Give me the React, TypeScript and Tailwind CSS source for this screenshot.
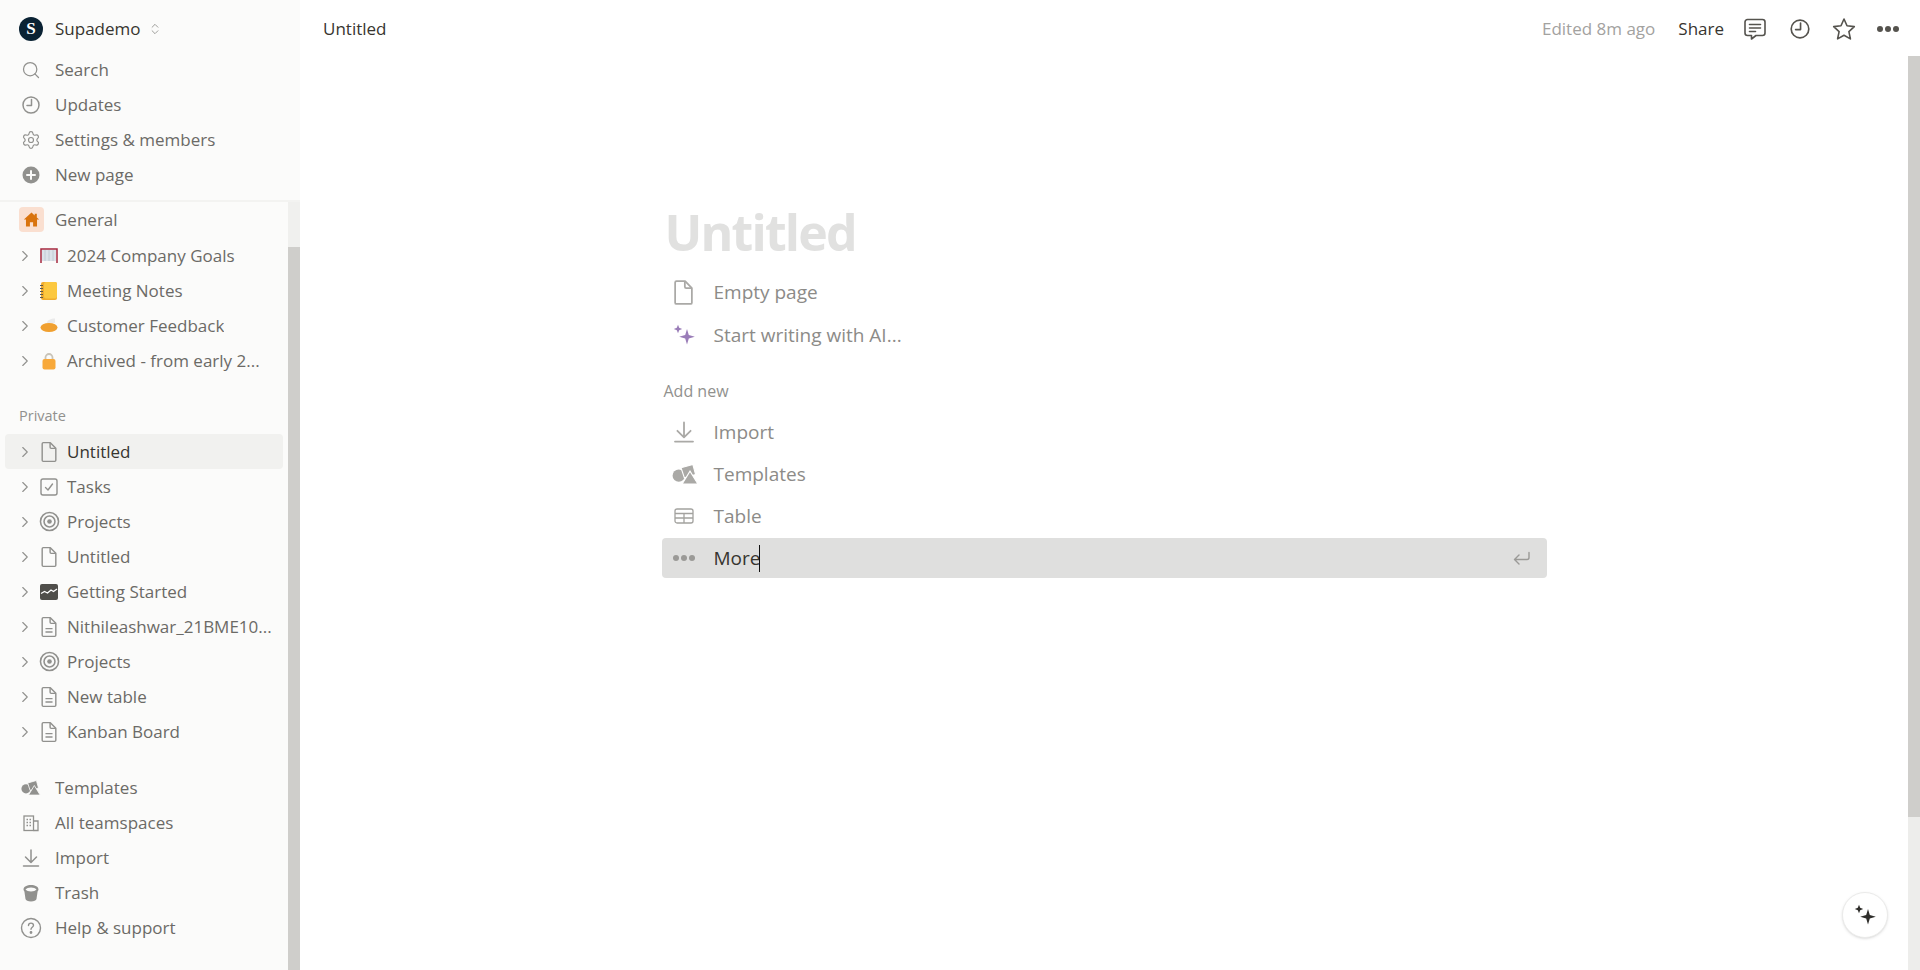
import type { ReactNode } from 'react';
import { ChevronRight, ChevronsUpDown, Search, Settings } from 'lucide-react';

const Clock = ({ size = 20, color = '#91918e' }: { size?: number; color?: string }) => (
  <svg width={size} height={size} viewBox="0 0 20 20" fill="none" stroke={color} strokeWidth="1.5" strokeLinecap="round" strokeLinejoin="round">
    <circle cx="10" cy="10" r="8" />
    <path d="M10.5 4.5V10.5H6" />
  </svg>
);

const PageIcon = ({ lines = false, size = 22, color = '#91918e' }: { lines?: boolean; size?: number; color?: string }) => (
  <svg width={size} height={size} viewBox="0 0 20 20" fill="none" stroke={color} strokeWidth="1.3" strokeLinejoin="round">
    <path d="M3.800 2.500a1 1 0 0 1 1-1h6.400l5 5.200v10.800a1 1 0 0 1-1 1H4.800a1 1 0 0 1-1-1z" />
    <path d="M11 1.700v4a1 1 0 0 0 1 1h4" />
    {lines && <path d="M6.800 11.500h6.400M6.800 14.500h6.400" />}
  </svg>
);

const TaskIcon = () => (
  <svg width="20" height="20" viewBox="0 0 20 20" fill="none" stroke="#91918e" strokeWidth="1.4" strokeLinecap="round" strokeLinejoin="round">
    <rect x="2" y="2" width="16" height="16" rx="2" />
    <path d="M6.500 10.500l2.500 2.500 4.500-6" />
  </svg>
);

const TargetIcon = () => (
  <svg width="21" height="21" viewBox="0 0 20 20" fill="none" stroke="#91918e">
    <circle cx="10" cy="10" r="8.600" strokeWidth="1.500" />
    <circle cx="10" cy="10" r="5.200" strokeWidth="1.500" />
    <circle cx="10" cy="10" r="2.200" fill="#91918e" stroke="none" />
  </svg>
);

const ChartIcon = () => (
  <svg width="20" height="20" viewBox="0 0 20 20">
    <rect x="1" y="2" width="18" height="16" rx="2" fill="#4f4e4a" />
    <path d="M2 11.500l3.500-2 3 1.500 3.500-3 2.500 1.500 3.500-2.500" fill="none" stroke="#fff" strokeWidth="1.300" />
  </svg>
);

const TemplatesIcon = ({ size = 20, color = '#91918e', cut = '#fbfbfa' }: { size?: number; color?: string; cut?: string }) => (
  <svg width={size} height={size} viewBox="0 0 24 20" fill={color}>
    <circle cx="6" cy="11" r="5.500" />
    <path d="M8 4l10.500-3 2.500 9-10 3z" stroke={cut} strokeWidth="1" />
    <path d="M16 7l7 11.500H9z" stroke={cut} strokeWidth="1" />
  </svg>
);

const ImportIcon = ({ size = 20, color = '#91918e' }: { size?: number; color?: string }) => (
  <svg width={size} height={size} viewBox="0 0 20 20" fill="none" stroke={color} strokeWidth="1.500" strokeLinecap="round" strokeLinejoin="round">
    <path d="M10 2v12M4.500 9l5.500 5.500L15.500 9M2.500 18h15" />
  </svg>
);

const BuildingIcon = () => (
  <svg width="20" height="20" viewBox="0 0 20 20" fill="none" stroke="#91918e" strokeWidth="1.300">
    <rect x="3" y="3" width="9.500" height="14.500" />
    <path d="M12.500 8H17v9.500h-4.500M5.500 6.500h1.500M8.500 6.500H10M5.500 9.500h1.500M8.500 9.500H10M5.500 12.500h1.500M8.500 12.500H10" />
  </svg>
);

const TrashIcon = () => (
  <svg width="20" height="20" viewBox="0 0 20 20" fill="#91918e">
    <path d="M2.500 6.500C2.500 3.500 6 2 10 2s7.500 1.500 7.500 4.500c0 .8-.4 1.400-.9 1.900L15.500 16c-.3 1.500-2.500 2.500-5.500 2.500S4.800 17.500 4.500 16L3.400 8.400c-.5-.5-.9-1.100-.9-1.900z" />
    <path d="M4.500 6.500C5.500 5.200 7.500 4.500 10 4.500s4.500.7 5.500 2C14.500 7.700 12.500 8.400 10 8.400S5.500 7.700 4.500 6.500z" fill="#fbfbfa" />
  </svg>
);

const HelpIcon = () => (
  <svg width="22" height="22" viewBox="0 0 22 22" fill="none" stroke="#91918e" strokeWidth="1.400" strokeLinecap="round">
    <circle cx="11" cy="11" r="9.500" />
    <path d="M8.500 8.500c0-1.500 1.100-2.400 2.500-2.400s2.500.9 2.500 2.200c0 2-2.500 2-2.500 4" />
    <circle cx="11" cy="15.500" r=".7" fill="#91918e" />
  </svg>
);

const PlusCircle = () => (
  <svg width="20" height="20" viewBox="0 0 20 20">
    <circle cx="10" cy="10" r="8.500" fill="#91918e" />
    <path d="M10 6v8M6 10h8" stroke="#fbfbfa" strokeWidth="2" strokeLinecap="round" />
  </svg>
);

const Sparkles = ({ color, size = 20 }: { color: string; size?: number }) => (
  <svg width={size} height={size} viewBox="0 0 20 20" fill={color}>
    <path d="M5 1.500l1 2.500 2.500 1-2.500 1-1 2.500-1-2.500-2.500-1 2.500-1z" />
    <path d="M12.500 5l1.500 5 5 1.500-5 1.500-1.500 5-1.500-5-5-1.500 5-1.500z" />
  </svg>
);

const GoalIcon = () => (
  <svg width="20" height="20" viewBox="0 0 20 20" fill="none">
    <rect x="3" y="4" width="14" height="11" fill="#dbe3ea" />
    <path d="M2 17V3h16v14" stroke="#a5283f" strokeWidth="1.500" />
    <path d="M6 4v11M10 4v11M14 4v11" stroke="#bcc6cf" strokeWidth=".8" />
  </svg>
);

const NotebookIcon = () => (
  <svg width="20" height="20" viewBox="0 0 20 20">
    <rect x="2" y="1" width="16" height="18" rx="2" fill="#f0ac2e" />
    <rect x="5" y="1" width="13" height="16.500" rx="2" fill="#fcc83f" />
    <path d="M1 4.500h3M1 7.500h3M1 10.500h3M1 13.500h3M1 16.500h3" stroke="#5f5a4c" strokeWidth="1.100" />
  </svg>
);

const PieIcon = () => (
  <svg width="20" height="20" viewBox="0 0 20 20">
    <path d="M8 7c0-3 4-4.500 8-4.500V7z" fill="#eaeaea" />
    <ellipse cx="10" cy="11.500" rx="8.500" ry="4.500" fill="#f0a030" />
  </svg>
);

const LockIcon = () => (
  <svg width="20" height="20" viewBox="0 0 20 20" fill="none">
    <path d="M6.500 9V6.500a3.500 3.500 0 0 1 7 0V9" stroke="#c9c4b8" strokeWidth="1.800" />
    <rect x="3.500" y="8" width="13" height="10.500" rx="2" fill="#f8a93a" />
  </svg>
);

const HomeIcon = () => (
  <svg width="17" height="17" viewBox="0 0 16 16" fill="#d9730d">
    <path d="M8 1.500L0.800 8h2v6.500h3.700v-4h3v4h3.700V8h2l-2.200-2V2.500h-2v1.700z" />
  </svg>
);

const TableIcon = () => (
  <svg width="20" height="20" viewBox="0 0 20 20" fill="none" stroke="#a3a29f" strokeWidth="1.300">
    <rect x="1" y="3" width="18" height="14" rx="2" />
    <path d="M1 7.500h18M1 12h18M10 7.500V17" />
  </svg>
);

const Dots = ({ color, size = 5, gap = 3 }: { color: string; size?: number; gap?: number }) => (
  <svg width={size * 3 + gap * 2} height={size} viewBox={`0 0 ${size * 3 + gap * 2} ${size}`} fill={color}>
    <circle cx={size / 2} cy={size / 2} r={size / 2} />
    <circle cx={size * 1.5 + gap} cy={size / 2} r={size / 2} />
    <circle cx={size * 2.5 + gap * 2} cy={size / 2} r={size / 2} />
  </svg>
);

function NavRow({ icon, label }: { icon: ReactNode; label: string }) {
  return (
    <div className="flex h-[35px] items-center text-[#6b6a66]">
      <span className="flex w-[55px] shrink-0 justify-center pl-[7px]">{icon}</span>
      <span>{label}</span>
    </div>
  );
}

function TreeRow({ icon, label, active }: { icon: ReactNode; label: string; active?: boolean }) {
  return (
    <div className={`mx-[5px] flex h-[35px] items-center rounded ${active ? 'bg-[#f1f1ef] font-medium text-[#37352f]' : 'text-[#6b6a66]'}`}>
      <span className="flex w-[30px] shrink-0 justify-center pl-[10px]">
        <ChevronRight size={18} strokeWidth={1.500} color="#91918e" />
      </span>
      <span className="flex w-[28px] shrink-0 justify-center">{icon}</span>
      <span className="truncate pl-[4px]">{label}</span>
    </div>
  );
}

function BlockRow({ icon, label }: { icon: ReactNode; label: string }) {
  return (
    <div className="flex h-[40px] items-center text-[19px] text-[#8c8b88]">
      <span className="flex w-[44px] shrink-0 justify-center">{icon}</span>
      <span className="pl-[8px]">{label}</span>
    </div>
  );
}

export default function App() {
  return (
    <div className="flex h-screen w-full overflow-hidden bg-white font-['Open_Sans','Liberation_Sans',sans-serif] text-[17px]">
      <aside className="flex w-[300px] shrink-0 flex-col bg-[#fbfbfa]">
        <div className="h-[202px] shrink-0 border-b-2 border-[#f3f3f1]">
          <div className="flex h-[52px] items-center pt-[6px]">
            <span className="flex w-[55px] shrink-0 justify-center pl-[7px]">
              <span className="flex h-6 w-6 items-center justify-center rounded-full bg-[#0a2233] font-['Liberation_Serif',serif] text-[17px] font-bold text-white">S</span>
            </span>
            <span className="font-medium text-[#37352f]">Supademo</span>
            <ChevronsUpDown size={14} strokeWidth={1.500} color="#91918e" className="ml-[7px]" />
          </div>
          <NavRow icon={<Search size={20} strokeWidth={1.500} color="#91918e" />} label="Search" />
          <NavRow icon={<Clock />} label="Updates" />
          <NavRow icon={<Settings size={20} strokeWidth={1.400} color="#91918e" />} label="Settings & members" />
          <NavRow icon={<PlusCircle />} label="New page" />
        </div>

        <div className="flex min-h-0 flex-1">
          <div className="min-w-0 flex-1">
            <div className="flex h-[35px] items-center text-[#6b6a66]">
              <span className="flex w-[55px] shrink-0 justify-center pl-[7px]">
                <span className="flex h-[25px] w-[25px] items-center justify-center rounded-sm bg-[#fadfd0]">
                  <HomeIcon />
                </span>
              </span>
              <span>General</span>
            </div>
            <div className="mt-px">
              <TreeRow icon={<GoalIcon />} label="2024 Company Goals" />
              <TreeRow icon={<NotebookIcon />} label="Meeting Notes" />
              <TreeRow icon={<PieIcon />} label="Customer Feedback" />
              <TreeRow icon={<LockIcon />} label="Archived - from early 2..." />
            </div>

            <div className="mt-[28px] mb-[8px] flex h-[20px] items-center pl-[19px] text-[14.500px] text-[#91918e]">Private</div>
            <TreeRow active icon={<PageIcon />} label="Untitled" />
            <TreeRow icon={<TaskIcon />} label="Tasks" />
            <TreeRow icon={<TargetIcon />} label="Projects" />
            <TreeRow icon={<PageIcon />} label="Untitled" />
            <TreeRow icon={<ChartIcon />} label="Getting Started" />
            <TreeRow icon={<PageIcon lines />} label="Nithileashwar_21BME10..." />
            <TreeRow icon={<TargetIcon />} label="Projects" />
            <TreeRow icon={<PageIcon lines />} label="New table" />
            <TreeRow icon={<PageIcon lines />} label="Kanban Board" />

            <div className="mt-[21px]">
              <NavRow icon={<TemplatesIcon />} label="Templates" />
              <NavRow icon={<BuildingIcon />} label="All teamspaces" />
              <NavRow icon={<ImportIcon />} label="Import" />
              <NavRow icon={<TrashIcon />} label="Trash" />
              <NavRow icon={<HelpIcon />} label="Help & support" />
            </div>
          </div>
          <div className="flex w-[12px] shrink-0 flex-col bg-[#cfcecb]">
            <div className="h-[45px] bg-[#f0f0ee]" />
          </div>
        </div>
      </aside>

      <main className="flex min-w-0 flex-1 flex-col">
        <header className="flex h-[56px] shrink-0 items-center pt-[2px] pl-[23px] text-[#37352f]">
          <span>Untitled</span>
          <span className="ml-auto text-[#a3a29f]">Edited 8m ago</span>
          <span className="ml-[23px]">Share</span>
          <span className="ml-[19px] flex w-[24px] justify-center">
            <svg width="24" height="24" viewBox="0 0 24 24" fill="none" stroke="#55534e" strokeWidth="1.600" strokeLinejoin="round" strokeLinecap="round">
              <path d="M4.500 2.500h15a2.500 2.500 0 0 1 2.500 2.500v11a2.500 2.500 0 0 1-2.500 2.500H13L8.500 22v-3.500h-4A2.500 2.500 0 0 1 2 16V5a2.500 2.500 0 0 1 2.500-2.500z" />
              <path d="M6.500 7.500h11M6.500 11h11M6.500 14.500h6" />
            </svg>
          </span>
          <span className="ml-[21px] flex w-[24px] justify-center"><Clock size={22} color="#55534e" /></span>
          <span className="ml-[20px] flex w-[24px] justify-center">
            <svg width="24" height="24" viewBox="0 0 24 24" fill="none" stroke="#55534e" strokeWidth="1.600" strokeLinejoin="round">
              <path d="M12 2l3 6.800 7.300.8-5.400 5 1.500 7.300L12 18.200l-6.400 3.700 1.500-7.300-5.400-5 7.300-.8z" />
            </svg>
          </span>
          <span className="mr-[20px] ml-[20px] flex w-[24px] justify-center"><Dots color="#55534e" size={6} gap={2} /></span>
        </header>

        <div className="flex min-h-0 flex-1">
          <div className="relative min-w-0 flex-1">
            <div className="mx-auto w-[885px] pt-[146px]">
              <h1 className="flex h-[60px] items-center pl-[3px] text-[50px] font-bold tracking-[-1.800px] text-[#e1e1e0]">Untitled</h1>
              <div className="mt-[10px]">
                <BlockRow icon={<PageIcon size={27} color="#aaa9a6" />} label="Empty page" />
              </div>
              <div className="mt-[3px]">
                <BlockRow icon={<Sparkles color="#9a7db8" size={24} />} label="Start writing with AI..." />
              </div>
              <div className="mt-[26px] flex h-[20px] items-center pl-[2px] text-[16px] text-[#91918e]">Add new</div>
              <div className="mt-[11px] flex flex-col gap-[2px]">
                <BlockRow icon={<ImportIcon size={24} color="#aaa9a6" />} label="Import" />
                <BlockRow icon={<span className="pl-[3px]"><TemplatesIcon size={27} color="#aaa9a6" cut="#ffffff" /></span>} label="Templates" />
                <BlockRow icon={<TableIcon />} label="Table" />
                <div className="flex h-[40px] items-center rounded bg-[#dfdfde] text-[19px] text-[#37352f]">
                  <span className="flex w-[44px] shrink-0 justify-center pl-[1px]"><Dots color="#9b9a97" size={6} gap={2} /></span>
                  <span className="pl-[8px]">More</span>
                  <span className="-ml-[1px] h-[27px] w-px bg-[#111]" />
                  <svg className="mr-[15px] ml-auto" width="20" height="20" viewBox="0 0 20 20" fill="none" stroke="#9b9a97" strokeWidth="1.400" strokeLinecap="round" strokeLinejoin="round">
                    <path d="M17 4.500v5a2 2 0 0 1-2 2H3M7 7l-4.500 4.500L7 16" />
                  </svg>
                </div>
              </div>
            </div>
            <button className="absolute right-[20px] bottom-[32px] flex h-[46px] w-[46px] items-center justify-center rounded-full border border-[#ebebea] bg-white shadow-sm">
              <Sparkles color="#2f2e2b" size={24} />
            </button>
          </div>
          <div className="flex w-[12px] shrink-0 flex-col bg-[#ededeb]">
            <div className="h-[761px] bg-[#cfcecb]" />
          </div>
        </div>
      </main>
    </div>
  );
}
